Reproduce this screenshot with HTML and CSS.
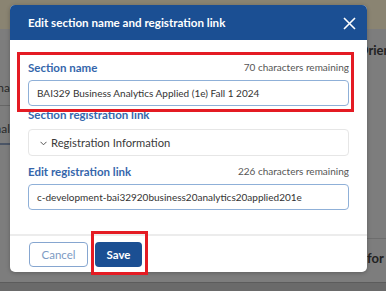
FILE: index.html
```html
<!doctype html>
<html lang="en">
<head>
  <meta charset="utf-8">
  <title>Edit section</title>
  <meta name="viewport" content="width=device-width, initial-scale=1">
  <link rel="stylesheet" href="styles.css">
</head>
<body>
  <div class="page">
    <div class="page-top"></div>
    <div class="page-main">
      <div class="page-left">
        <div class="left-row first"><span>Ana</span></div>
        <div class="left-row second"><span>Anal</span></div>
      </div>
      <div class="page-center"></div>
      <div class="page-right">
        <div class="right-row first">Orien</div>
        <div class="right-row second">for</div>
      </div>
    </div>
    <div class="page-bottom"></div>
  </div>

  <div class="modal">
    <div class="modal-header">
      <span class="modal-title">Edit section name and registration link</span>
      <svg class="modal-close" width="13" height="13" viewBox="0 0 13 13">
        <path d="M1 1 L12 12 M12 1 L1 12" stroke="#fff" stroke-width="1.6" fill="none"/>
      </svg>
    </div>
    <div class="modal-body">
      <div class="field-head">
        <label class="field-label">Section name</label>
        <span class="field-count">70 characters remaining</span>
      </div>
      <div class="field-input">BAI329 Business Analytics Applied (1e) Fall 1 2024</div>

      <div class="field-head tight">
        <label class="field-label">Section registration link</label>
      </div>
      <div class="accordion">
        <svg class="chevron" width="7" height="5" viewBox="0 0 7 5">
          <path d="M0.5 0.8 L3.5 3.8 L6.5 0.8" stroke="#555" stroke-width="1" fill="none"/>
        </svg>
        <span>Registration Information</span>
      </div>

      <div class="field-head spaced">
        <label class="field-label">Edit registration link</label>
        <span class="field-count">226 characters remaining</span>
      </div>
      <div class="field-input">c-development-bai32920business20analytics20applied201e</div>
    </div>
    <div class="modal-footer">
      <button class="btn btn-cancel">Cancel</button>
      <button class="btn btn-save">Save</button>
    </div>

    <div class="mark mark-name"></div>
    <div class="mark mark-save"></div>
  </div>
</body>
</html>
```

FILE: styles.css
```css
html, body {
  margin: 0;
  height: 100%;
  overflow: hidden;
}
body {
  background: #7b7b7b;
  font-family: 'Lato', 'Open Sans', sans-serif;
  position: relative;
}

/* dimmed page behind the dialog */
.page {
  display: flex;
  flex-direction: column;
  height: 291px;
}
.page-top {
  height: 29px;
  background: #8a8472;
}
.page-main {
  flex: 1;
  display: flex;
  background: #7d7d7d;
}
.page-left {
  width: 10px;
  overflow: hidden;
}
.left-row {
  display: flex;
  justify-content: flex-end;
  font-size: 12px;
  color: #2a2a2a;
  white-space: nowrap;
  border-bottom: 1px solid #666;
}
.left-row.first {
  margin-top: 51px;
  height: 25px;
}
.left-row.second {
  height: 22px;
  padding-top: 15px;
  border-bottom: 2px solid #4b5566;
}
.page-center {
  flex: 1;
}
.page-right {
  width: 19px;
  overflow: hidden;
  font-size: 13px;
  font-weight: 700;
  color: #222;
  white-space: nowrap;
}
.right-row.first {
  margin-top: 13px;
  text-indent: -9px;
}
.right-row.second {
  margin-top: 180px;
  border-top: 1px solid #6d6d6d;
  padding-top: 11px;
}
.page-bottom {
  height: 8px;
  background: #6a6a6a;
  border-top: 1px solid #5c5c5c;
}

/* dialog */
.modal {
  position: absolute;
  left: 10px;
  top: 5px;
  width: 357px;
  height: 267px;
  background: #fff;
  border-radius: 5px;
  box-shadow: 0 1px 4px rgba(0,0,0,0.25);
  display: flex;
  flex-direction: column;
}
.modal-header {
  height: 35px;
  background: #1b4f93;
  border-radius: 5px 5px 0 0;
  display: flex;
  align-items: center;
  justify-content: space-between;
  padding: 0 11px 0 18px;
}
.modal-title {
  color: #fff;
  font-size: 11.6px;
  font-weight: 700;
}
.modal-close {
  margin-top: 1px;
}
.modal-body {
  padding: 20px 18px 24px 18px;
  display: flex;
  flex-direction: column;
  border-bottom: 2px solid #ececec;
}
.field-head {
  display: flex;
  justify-content: space-between;
  align-items: center;
  height: 14px;
}
.field-head.tight {
  margin-top: 1px;
}
.field-head.spaced {
  margin-top: 8px;
}
.field-label {
  color: #3566ab;
  font-size: 11.5px;
  font-weight: 700;
}
.field-count {
  color: #555;
  font-size: 10px;
}
.field-input {
  margin-top: 6px;
  height: 24px;
  border: 1px solid #8fb0d8;
  border-radius: 4px;
  padding: 0 8px;
  display: flex;
  align-items: center;
  font-size: 10px;
  color: #333;
  white-space: nowrap;
  overflow: hidden;
}
.accordion {
  margin-top: 8px;
  height: 25px;
  border: 1px solid #e6e6e6;
  border-radius: 4px;
  display: flex;
  align-items: center;
  gap: 4px;
  padding: 0 10px 0 11px;
  font-size: 11.2px;
  color: #3a3a3a;
}
.chevron {
  margin-top: 1px;
}
.modal-footer {
  display: flex;
  gap: 7px;
  padding: 6px 19px 0 19px;
}
.btn {
  height: 25px;
  border-radius: 4px;
  font-family: inherit;
  font-size: 11.5px;
  padding: 0;
  cursor: pointer;
}
.btn-cancel {
  width: 59px;
  background: #fff;
  border: 1px solid #86a6d0;
  color: #7d9ac3;
}
.btn-save {
  width: 47px;
  background: #1b4f93;
  border: none;
  color: #fff;
  font-weight: 700;
}

/* red annotation boxes */
.mark {
  position: absolute;
  border: 3px solid #e41b23;
  pointer-events: none;
}
.mark-name {
  left: 7px;
  top: 47px;
  width: 331px;
  height: 54px;
}
.mark-save {
  left: 81px;
  top: 226px;
  width: 51px;
  height: 38px;
}
```
